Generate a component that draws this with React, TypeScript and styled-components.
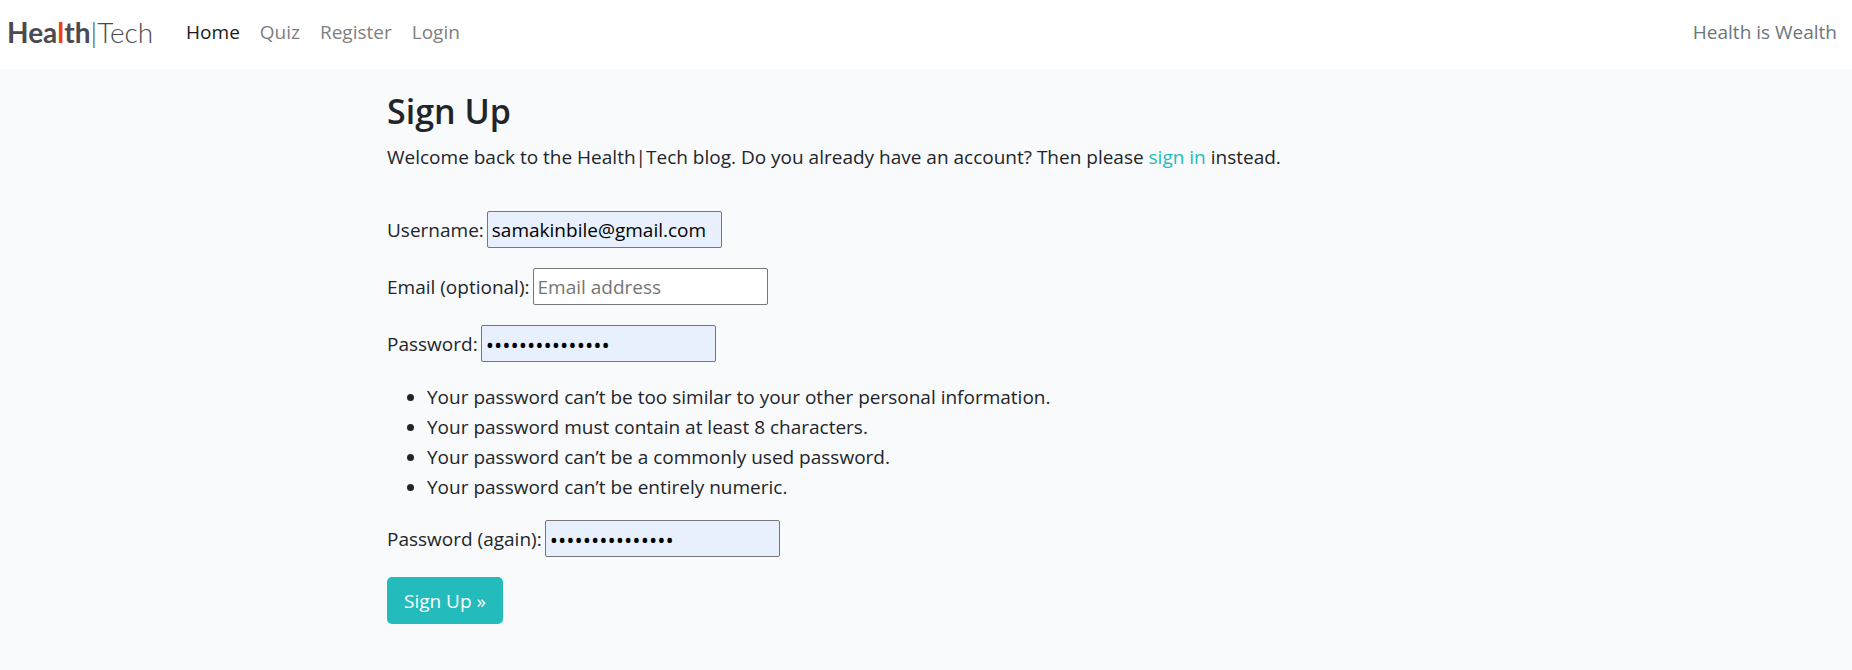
import React from "react";
import styled, { createGlobalStyle } from "styled-components";

const GlobalStyle = createGlobalStyle`
  *, *::before, *::after { box-sizing: border-box; }
  body {
    margin: 0;
    min-height: 100vh;
    background: #f9fafc;
    color: #212529;
    font-family: "Open Sans", "Noto Sans", sans-serif;
    font-size: 19px;
    line-height: 30px;
  }
`;

const Navbar = styled.nav`
  display: flex;
  align-items: center;
  min-height: 69px;
  padding: 0 15px 6px 7px;
  background: #fff;
`;

const Brand = styled.a`
  margin-right: 33px;
  color: #4a4a4f;
  font-family: Lato, sans-serif;
  font-size: 28px;
  font-weight: 300;
  text-decoration: none;
`;

const BrandStrong = styled.span`
  font-weight: 700;
`;

const BrandAccent = styled.span`
  color: #e84610;
`;

const NavList = styled.ul`
  display: flex;
  gap: 20px;
  margin: 0;
  padding: 0;
  list-style: none;
`;

const NavLink = styled.a<{ $active?: boolean }>`
  color: ${({ $active }) => ($active ? "#191919" : "#808080")};
  text-decoration: none;
`;

const Tagline = styled.span`
  margin-left: auto;
  color: #6c757d;
`;

const Main = styled.main`
  max-width: 1118px;
  margin: 0 auto;
  padding: 21px 20px;
`;

const Heading = styled.h1`
  margin: 0 0 10px;
  font-size: 34px;
  font-weight: 600;
  line-height: 42px;
`;

const Intro = styled.p`
  margin: 0 0 39px;
`;

const TextLink = styled.a`
  color: #23bbbb;
  text-decoration: none;
`;

const Form = styled.form`
  display: flex;
  flex-direction: column;
  align-items: flex-start;
  gap: 20px;
`;

const Field = styled.div`
  display: flex;
  align-items: center;
  gap: 3px;
`;

const Input = styled.input<{ $filled?: boolean }>`
  width: 235px;
  height: 37px;
  padding: 1px 4px;
  border: 1px solid #767676;
  border-radius: 2px;
  background: ${({ $filled }) => ($filled ? "#e8f0fe" : "#fff")};
  color: #000;
  font: inherit;
  outline: none;

  &::placeholder {
    color: #757575;
    opacity: 1;
  }

  &[type="password"] {
    font-size: 22px;
  }
`;

const Rules = styled.ul`
  margin: 0 0 -2px;
  padding: 0 0 0 40px;
`;

const SubmitButton = styled.button`
  height: 47px;
  padding: 0 17px;
  border: 0;
  border-radius: 5px;
  background: #23bbbb;
  color: #fff;
  font: inherit;
  cursor: pointer;
`;

const links = ["Home", "Quiz", "Register", "Login"];

const rules = [
  "Your password can’t be too similar to your other personal information.",
  "Your password must contain at least 8 characters.",
  "Your password can’t be a commonly used password.",
  "Your password can’t be entirely numeric.",
];

export default function App() {
  return (
    <>
      <GlobalStyle />
      <Navbar>
        <Brand href="#">
          <BrandStrong>
            Hea<BrandAccent>l</BrandAccent>th
          </BrandStrong>
          |Tech
        </Brand>
        <NavList>
          {links.map((label, i) => (
            <li key={label}>
              <NavLink href="#" $active={i === 0}>
                {label}
              </NavLink>
            </li>
          ))}
        </NavList>
        <Tagline>Health is Wealth</Tagline>
      </Navbar>
      <Main>
        <Heading>Sign Up</Heading>
        <Intro>
          Welcome back to the Health|Tech blog. Do you already have an account? Then please{" "}
          <TextLink href="#">sign in</TextLink> instead.
        </Intro>
        <Form onSubmit={(e) => e.preventDefault()}>
          <Field>
            <label htmlFor="username">Username:</label>
            <Input id="username" type="text" defaultValue="samakinbile@gmail.com" $filled />
          </Field>
          <Field>
            <label htmlFor="email">Email (optional):</label>
            <Input id="email" type="email" placeholder="Email address" />
          </Field>
          <Field>
            <label htmlFor="password1">Password:</label>
            <Input id="password1" type="password" defaultValue="healthtech12345" $filled />
          </Field>
          <Rules>
            {rules.map((rule) => (
              <li key={rule}>{rule}</li>
            ))}
          </Rules>
          <Field>
            <label htmlFor="password2">Password (again):</label>
            <Input id="password2" type="password" defaultValue="healthtech12345" $filled />
          </Field>
          <SubmitButton type="submit">Sign Up »</SubmitButton>
        </Form>
      </Main>
    </>
  );
}
